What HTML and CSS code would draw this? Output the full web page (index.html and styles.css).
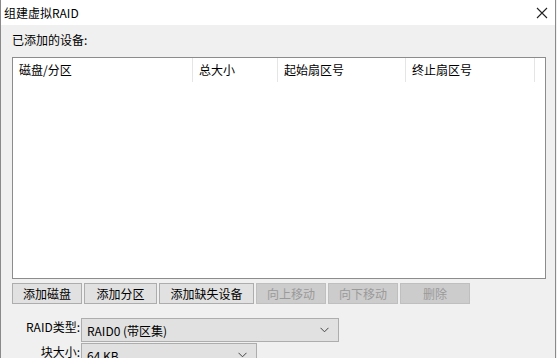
FILE: index.html
```html
<!DOCTYPE html>
<html lang="zh-CN">
<head>
    <meta charset="UTF-8">
    <title>组建虚拟RAID</title>
    <link rel="stylesheet" href="styles.css">
</head>
<body>
    <div class="window">
        <div class="titlebar">
            <span class="title">组建虚拟RAID</span>
            <span class="close-btn">
                <svg width="12" height="12" viewBox="0 0 12 12"><path d="M1 1 L11 11 M11 1 L1 11" stroke="#222" stroke-width="1.1" fill="none"/></svg>
            </span>
        </div>

        <div class="content">
            <div class="section-label">已添加的设备:</div>

            <div class="device-list">
                <div class="list-header">
                    <div class="col col-disk">磁盘/分区</div>
                    <div class="col col-size">总大小</div>
                    <div class="col col-start">起始扇区号</div>
                    <div class="col col-end">终止扇区号</div>
                </div>
            </div>

            <div class="toolbar">
                <button class="btn btn-w70">添加磁盘</button>
                <button class="btn btn-w73">添加分区</button>
                <button class="btn btn-w95">添加缺失设备</button>
                <button class="btn btn-w70" disabled>向上移动</button>
                <button class="btn btn-w70" disabled>向下移动</button>
                <button class="btn btn-w70" disabled>删除</button>
            </div>

            <div class="form">
                <div class="form-row">
                    <label class="form-label">RAID类型:</label>
                    <div class="select select-wide">
                        <span>RAID0 (带区集)</span>
                        <svg class="chevron" width="9" height="6" viewBox="0 0 9 6"><path d="M0.5 0.8 L4.5 4.8 L8.5 0.8" stroke="#444" stroke-width="1" fill="none"/></svg>
                    </div>
                </div>
                <div class="form-row">
                    <label class="form-label">块大小:</label>
                    <div class="select select-narrow">
                        <span>64 KB</span>
                        <svg class="chevron" width="9" height="6" viewBox="0 0 9 6"><path d="M0.5 0.8 L4.5 4.8 L8.5 0.8" stroke="#444" stroke-width="1" fill="none"/></svg>
                    </div>
                </div>
            </div>
        </div>
    </div>
</body>
</html>
```

FILE: styles.css
```css
body {
    margin: 0;
    font-family: "Noto Sans CJK SC", "Noto Sans", sans-serif;
    font-size: 12px;
    color: #000;
    background-color: #f0f0f0;
}
.window {
    width: 556px;
    height: 358px;
    overflow: hidden;
    box-sizing: border-box;
    border-left: 1px solid #8a8a8a;
    border-right: 1px solid #8a8a8a;
    background-color: #f0f0f0;
}
.titlebar {
    height: 25px;
    background-color: #fff;
    display: flex;
    justify-content: space-between;
    align-items: center;
    padding-left: 3px;
    padding-right: 7px;
}
.title {
    font-size: 12px;
    color: #000;
}
.close-btn {
    display: flex;
    align-items: center;
}
.content {
    padding: 0 11px;
}
.section-label {
    height: 16px;
    line-height: 16px;
    margin-top: 7px;
}
.device-list {
    margin-top: 9px;
    width: 534px;
    height: 222px;
    box-sizing: border-box;
    background-color: #fff;
    border: 1px solid #8c8c8c;
}
.list-header {
    display: flex;
    height: 24px;
    align-items: stretch;
}
.col {
    box-sizing: border-box;
    padding-left: 6px;
    line-height: 24px;
    border-right: 1px solid #e5e5e5;
}
.col-disk { width: 180px; }
.col-size { width: 85px; }
.col-start { width: 128px; }
.col-end { width: 129px; }
.toolbar {
    display: flex;
    gap: 2px;
    margin-top: 4px;
}
.btn {
    height: 21px;
    box-sizing: border-box;
    font-family: inherit;
    font-size: 12px;
    color: #000;
    background-color: #e1e1e1;
    border: 1px solid #adadad;
    padding: 0;
}
.btn:disabled {
    color: #9a9a9a;
    background-color: #cccccc;
    border-color: #bfbfbf;
}
.btn-w70 { width: 70px; }
.btn-w73 { width: 73px; }
.btn-w95 { width: 95px; }
.form {
    display: flex;
    flex-direction: column;
    gap: 1px;
    margin-top: 14px;
}
.form-row {
    display: flex;
    align-items: flex-start;
}
.form-label {
    width: 69px;
    text-align: right;
    padding-right: 1px;
    padding-top: 1px;
    line-height: 16px;
    box-sizing: border-box;
}
.select {
    height: 24px;
    box-sizing: border-box;
    background-color: #e1e1e1;
    border: 1px solid #adadad;
    display: flex;
    align-items: center;
    justify-content: space-between;
    padding: 0 9px 0 5px;
}
.select-wide { width: 258px; }
.select-narrow { width: 176px; }
```
